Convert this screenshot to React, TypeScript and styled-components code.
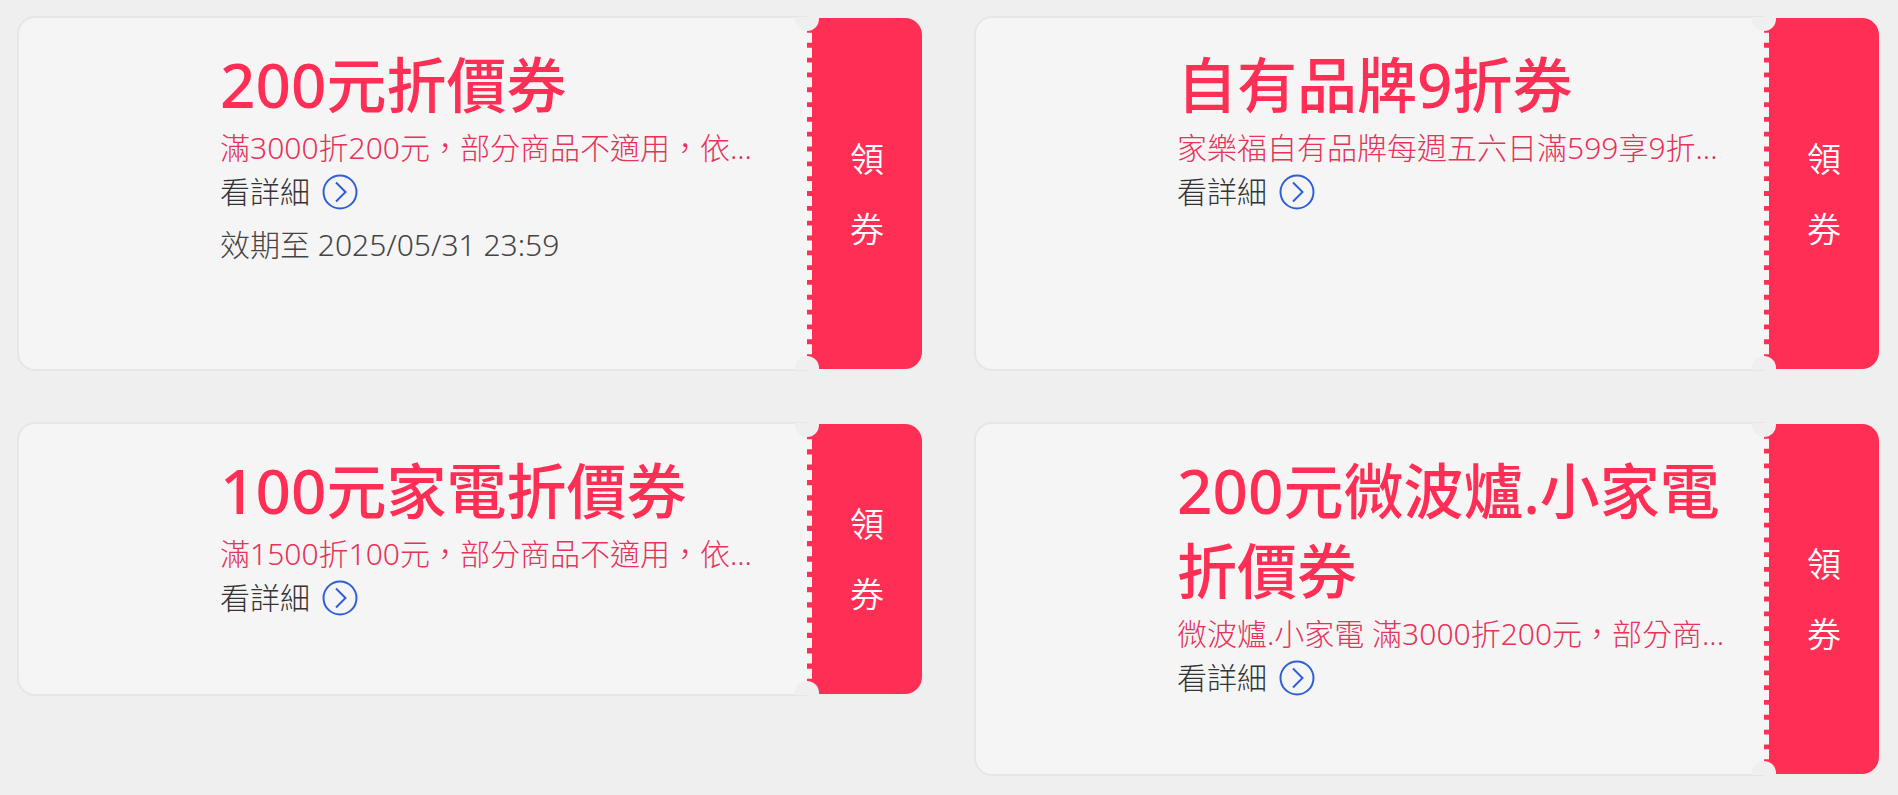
import React from "react";
import styled, { createGlobalStyle } from "styled-components";

const GlobalStyle = createGlobalStyle`
  *, *::before, *::after { box-sizing: border-box; }
  body {
    margin: 0;
    background: #efefef;
    font-family: "Noto Sans", "Noto Sans CJK TC", sans-serif;
  }
`;

const CouponGrid = styled.main`
  display: grid;
  grid-template-columns: repeat(2, minmax(0, 1fr));
  gap: 51px 52px;
  padding: 16px 19px 16px 17px;
`;

const Card = styled.article<{ $stretch?: boolean }>`
  display: flex;
  align-self: ${(p) => (p.$stretch ? "stretch" : "start")};
`;

const Details = styled.div`
  flex: 1;
  min-width: 0;
  padding: 27px 32px 74px 201px;
  background: #f5f5f5;
  border: 2px solid #e6e6e6;
  border-right: 0;
  border-radius: 18px 0 0 18px;
`;

const Title = styled.h2`
  margin: 0;
  font-size: 60px;
  line-height: 80px;
  font-weight: 500;
  color: #ff2e55;
`;

const Numerals = styled.span`
  font-size: 62px;
  line-height: 60px;
`;

const Description = styled.p`
  margin: 0;
  font-size: 30px;
  line-height: 45px;
  font-weight: 300;
  color: #e6335a;
  white-space: nowrap;
  overflow: hidden;
  text-overflow: ellipsis;
`;

const DetailLink = styled.a`
  display: flex;
  width: fit-content;
  align-items: center;
  gap: 12px;
  height: 44px;
  font-size: 30px;
  line-height: 44px;
  font-weight: 300;
  color: #333;
  text-decoration: none;
`;

const Expiry = styled.p`
  margin: 8px 0 28px;
  font-size: 30px;
  line-height: 45px;
  font-weight: 300;
  color: #444;
`;

const ClaimButton = styled.button`
  flex: none;
  display: flex;
  flex-direction: column;
  align-items: center;
  justify-content: center;
  width: 115px;
  margin: 2px 0;
  padding: 0;
  overflow: hidden;
  border: 0;
  border-left: 5px dashed #f5f5f5;
  border-radius: 0 17px 17px 0;
  background: #ff2e55;
  color: #fff;
  font-family: inherit;
  font-size: 34px;
  line-height: 70px;
  font-weight: 350;
  cursor: pointer;
`;

const Stub = styled.div`
  position: relative;
  display: flex;

  &::before,
  &::after {
    content: "";
    position: absolute;
    z-index: 1;
    left: -12px;
    width: 24px;
    height: 14px;
    background: #efefef;
  }
  &::before {
    top: 1px;
    border-radius: 0 0 12px 12px;
  }
  &::after {
    bottom: 1px;
    border-radius: 12px 12px 0 0;
  }
`;

const ArrowIcon = () => (
  <svg width="36" height="36" viewBox="0 0 36 36" fill="none" stroke="#2f5fd8" strokeWidth="2" aria-hidden="true">
    <circle cx="18" cy="18" r="16.5" />
    <path d="M14 8.5 L23.5 18 L14 27.5" />
  </svg>
);

// Sets a title's digits slightly larger than its Chinese characters.
const TitleText = ({ text }: { text: string }) => (
  <>
    {text
      .split(/([0-9]+)/)
      .map((part, index) => (index % 2 ? <Numerals key={index}>{part}</Numerals> : part))}
  </>
);

type Coupon = {
  title: string;
  description: string;
  expiry?: string;
};

const coupons: Coupon[] = [
  {
    title: "200元折價券",
    description: "滿3000折200元，部分商品不適用，依...",
    expiry: "效期至 2025/05/31 23:59",
  },
  {
    title: "自有品牌9折券",
    description: "家樂福自有品牌每週五六日滿599享9折...",
  },
  {
    title: "100元家電折價券",
    description: "滿1500折100元，部分商品不適用，依...",
  },
  {
    title: "200元微波爐.小家電折價券",
    description: "微波爐.小家電 滿3000折200元，部分商...",
  },
];

const CouponCard = ({ coupon, stretch }: { coupon: Coupon; stretch: boolean }) => (
  <Card $stretch={stretch}>
    <Details>
      <Title>
        <TitleText text={coupon.title} />
      </Title>
      <Description>{coupon.description}</Description>
      <DetailLink href="#">
        看詳細
        <ArrowIcon />
      </DetailLink>
      {coupon.expiry && <Expiry>{coupon.expiry}</Expiry>}
    </Details>
    <Stub>
      <ClaimButton type="button" aria-label="領券">
        <span>領</span>
        <span>券</span>
      </ClaimButton>
    </Stub>
  </Card>
);

export default function App() {
  return (
    <>
      <GlobalStyle />
      <CouponGrid lang="zh-TW">
        {coupons.map((coupon, index) => (
          <CouponCard key={coupon.title} coupon={coupon} stretch={index < 2} />
        ))}
      </CouponGrid>
    </>
  );
}
